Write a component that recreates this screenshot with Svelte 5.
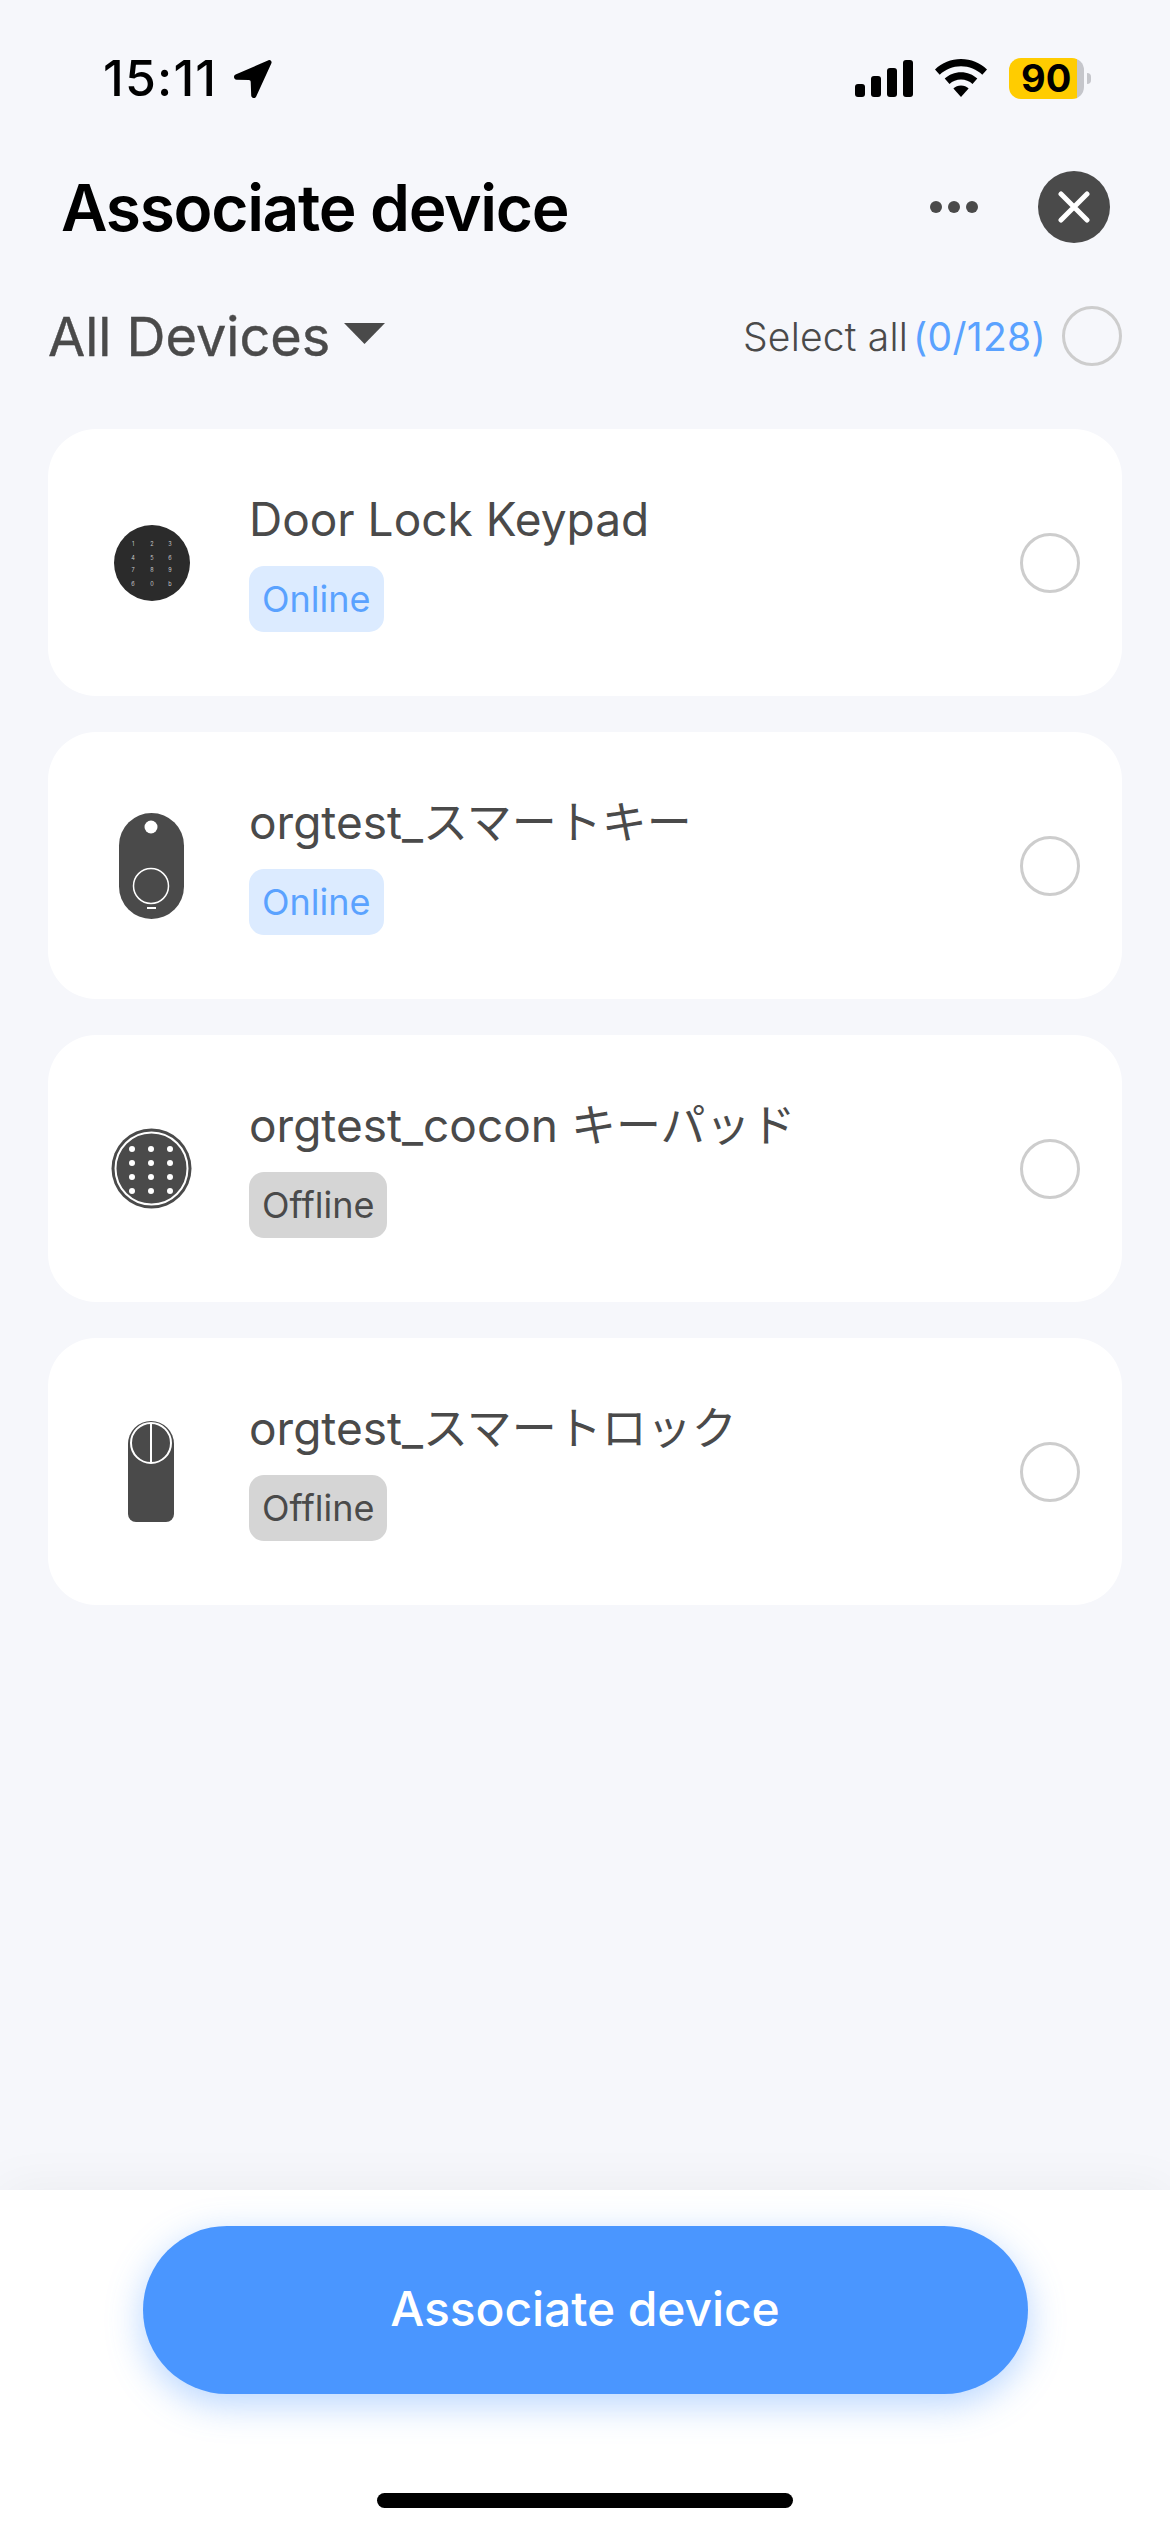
<script>
  const devices = [
    { name: 'Door Lock Keypad', jp: '', online: true, icon: 'keypad' },
    { name: 'orgtest_', jp: 'スマートキー', online: true, icon: 'key' },
    { name: 'orgtest_cocon ', jp: 'キーパッド', online: false, icon: 'cocon' },
    { name: 'orgtest_', jp: 'スマートロック', online: false, icon: 'lock' }
  ];
  const xs = [41, 60, 78];
  const ysK = [40.5, 54.5, 66.5, 80.5];
  const keys = ['1','2','3','4','5','6','7','8','9','6','0','b'];
  const cx = [40, 59, 78];
  const cy = [40, 54, 68, 82];
</script>

<div class="page">
  <div class="status">
    <div class="time">
      <span>15:11</span>
      <svg class="arrow" width="39" height="39" viewBox="0 0 39 39"><path d="M35.5 1.2 2.6 15.6c-2.6 1.2-1.9 5 1 5.1l12.3.4c1 0 1.7.8 1.8 1.8l.5 13.7c.1 2.8 3.9 3.5 5 .9L38.4 4.3c.8-2-1-3.9-2.9-3.1Z" fill="#000"/></svg>
    </div>
    <div class="sys">
      <svg width="58" height="37" viewBox="0 0 58 37" fill="#000"><rect x="0" y="24" width="10" height="13" rx="3"/><rect x="16" y="16" width="10" height="21" rx="3"/><rect x="32" y="8" width="10" height="29" rx="3"/><rect x="48" y="0" width="10" height="37" rx="3"/></svg>
      <svg class="wifi" width="52" height="38" viewBox="0 0 52 38" fill="#000"><path d="M26 0c10 0 19 3.900 26 10.400l-4.700 5.400C41.600 10.500 34.200 7.300 26 7.300S10.400 10.500 4.700 15.800L0 10.400C7 3.900 16 0 26 0Z"/><path d="M26 13.300c6.300 0 12 2.400 16.300 6.300l-4.800 5.400c-3-2.800-7.100-4.500-11.500-4.500s-8.500 1.700-11.500 4.500l-4.800-5.400C14 15.700 19.700 13.300 26 13.300Z"/><path d="M26 26.500c3 0 5.700 1.100 7.600 3L26 38l-7.600-8.500c1.900-1.900 4.600-3 7.600-3Z"/></svg>
      <div class="battery">
        <div class="cell"><span>90</span></div>
        <div class="nub"></div>
      </div>
    </div>
  </div>

  <div class="header">
    <h1>Associate device</h1>
    <div class="actions">
      <div class="dots"><i></i><i></i><i></i></div>
      <div class="close">
        <svg width="32" height="32" viewBox="0 0 32 32"><path d="M3 3 29 29M29 3 3 29" stroke="#fff" stroke-width="5" stroke-linecap="round"/></svg>
      </div>
    </div>
  </div>

  <div class="filter">
    <div class="filter-left">
      <span>All Devices</span>
      <svg width="41" height="21" viewBox="0 0 41 21"><path d="M0 0H41L20.500 21Z" fill="#4a4a4a"/></svg>
    </div>
    <div class="filter-right">
      <span class="sel">Select all</span><span class="count">(0/128)</span>
      <div class="radio top"></div>
    </div>
  </div>

  <div class="list">
    {#each devices as d}
      <div class="card">
        <svg class="icon" width="120" height="120" viewBox="0 0 120 120">
          {#if d.icon === 'keypad'}
            <circle cx="60" cy="60" r="38" fill="#2b2b2b"/>
            {#each keys as k, i}
              <text class="digit" x={xs[i % 3]} y={ysK[Math.floor(i / 3)] + 2} text-anchor="middle">{k}</text>
            {/each}
          {:else if d.icon === 'key'}
            <rect x="27" y="7" width="65" height="106" rx="32.500" fill="#4a4a4a"/>
            <circle cx="59" cy="21" r="6.500" fill="#fff"/>
            <circle cx="59" cy="80" r="17.500" fill="none" stroke="#fff" stroke-width="1.500"/>
            <rect x="55" y="101" width="9" height="2" fill="#fff"/>
          {:else if d.icon === 'cocon'}
            <circle cx="59.500" cy="59.500" r="40" fill="#4a4a4a"/>
            <circle cx="59.500" cy="59.500" r="36" fill="none" stroke="#fff" stroke-width="2"/>
            {#each cy as y}
              {#each cx as x}
                <circle cx={x} cy={y} r="3" fill="#fff"/>
              {/each}
            {/each}
          {:else}
            <path d="M36 32a23 23 0 0 1 46 0v70a8 8 0 0 1-8 8H44a8 8 0 0 1-8-8Z" fill="#4a4a4a"/>
            <circle cx="59" cy="31" r="20" fill="none" stroke="#fff" stroke-width="2"/>
            <path d="M59 11V51" stroke="#fff" stroke-width="2"/>
          {/if}
        </svg>
        <div class="info">
          <div class="name">{d.name}<span class="jp">{d.jp}</span></div>
          <div class="badge" class:on={d.online}>{d.online ? 'Online' : 'Offline'}</div>
        </div>
        <div class="radio"></div>
      </div>
    {/each}
  </div>

  <div class="footer">
    <button class="cta">Associate device</button>
    <div class="home"></div>
  </div>
</div>

<style>
  :global(body) { margin: 0; background: #f6f7fb; }
  .page {
    width: 1170px;
    height: 2532px;
    display: flex;
    flex-direction: column;
    background: #f6f7fb;
    font-family: Inter, "Noto Sans CJK JP", sans-serif;
    color: #4a4a4a;
    overflow: hidden;
  }
  .status {
    height: 156px;
    padding: 0 79px 0 103px;
    display: flex;
    justify-content: space-between;
    align-items: center;
    box-sizing: border-box;
    color: #000;
  }
  .time {
    display: flex;
    align-items: center;
    gap: 16px;
    font-size: 50px;
    font-weight: 500;
    letter-spacing: 1.200px;
  }
  .sys { display: flex; align-items: center; }
  .wifi { margin-left: 22px; margin-right: 22px; }
  .battery { display: flex; align-items: center; gap: 3px; }
  .cell {
    width: 75px;
    height: 41px;
    border-radius: 12px;
    box-sizing: border-box;
    background: linear-gradient(to right, #ffcc00 68px, #c5c6cb 68px);
    display: flex;
    align-items: center;
    padding-left: 12px;
    font-size: 38px;
    font-weight: 700;
    letter-spacing: 0;
    color: #000;
  }
  .nub {
    width: 4px;
    height: 11px;
    background: #c5c6cb;
    border-radius: 0 6px 6px 0;
  }
  .header {
    height: 102px;
    margin-top: 0;
    padding: 0 60px 0 61px;
    display: flex;
    justify-content: space-between;
    align-items: center;
    box-sizing: border-box;
  }
  h1 {
    margin: 0;
    font-size: 64px;
    font-weight: 600;
    color: #000;
    letter-spacing: -1.300px;
  }
  .actions { display: flex; align-items: center; gap: 60px; }
  .dots { display: flex; gap: 6px; }
  .dots i { width: 12px; height: 12px; border-radius: 50%; background: #4a4a4a; display: block; }
  .close {
    width: 72px;
    height: 72px;
    border-radius: 50%;
    background: #4a4a4a;
    display: flex;
    align-items: center;
    justify-content: center;
  }
  .filter {
    height: 78px;
    margin-top: 39px;
    padding: 0 48px;
    display: flex;
    justify-content: space-between;
    align-items: center;
  }
  .filter-left { display: flex; align-items: center; gap: 14px; font-size: 54px; -webkit-text-stroke: 0.4px #4a4a4a; }
  .filter-left svg { margin-top: -6px; }
  .filter-right { display: flex; align-items: center; font-size: 39px; }
  .sel { font-weight: 300; letter-spacing: 0.2px; }
  .count { color: #5aa2ff; margin-left: 5px; letter-spacing: 0.3px; }
  .radio {
    width: 60px;
    height: 60px;
    box-sizing: border-box;
    border: 3.500px solid #cdcdcd;
    border-radius: 50%;
    flex: none;
  }
  .radio.top { margin-left: 16px; }
  .list {
    margin-top: 54px;
    padding: 0 48px;
    display: flex;
    flex-direction: column;
    gap: 36px;
    flex: 1;
  }
  .card {
    height: 267px;
    background: #fff;
    border-radius: 48px;
    display: flex;
    align-items: center;
    padding: 0 42px 0 44px;
  }
  .icon { flex: none; }
  .digit { font-family: Inter, sans-serif; font-size: 5.5px; fill: #c8c8c8; }
  .info {
    flex: 1;
    margin-left: 37px;
    margin-bottom: 4px;
    display: flex;
    flex-direction: column;
    align-items: flex-start;
    gap: 16px;
  }
  .name { font-size: 46px; line-height: 60px; font-weight: 400; }
  .jp { font-size: 45px; }
  .badge {
    height: 66px;
    line-height: 66px;
    padding: 0 13px;
    border-radius: 15px;
    font-size: 36px;
    background: #d5d5d5;
    color: #4a4a4a;
  }
  .badge.on { background: #dcebff; color: #5aa2ff; }
  .footer {
    height: 342px;
    background: #fff;
    box-shadow: 0 0 50px rgba(0, 0, 0, 0.05);
    display: flex;
    flex-direction: column;
    align-items: center;
    padding-top: 36px;
    box-sizing: border-box;
  }
  .cta {
    width: 885px;
    height: 168px;
    border: 0;
    border-radius: 84px;
    padding: 0 0 3px;
    background: #4a96ff;
    color: #fff;
    font-family: inherit;
    font-size: 48px;
    font-weight: 500;
    letter-spacing: -0.100px;
    box-shadow: 0 10px 36px rgba(74, 150, 255, 0.4);
  }
  .home {
    width: 416px;
    height: 15px;
    margin-top: 99px;
    background: #000;
    border-radius: 8px;
  }
</style>
